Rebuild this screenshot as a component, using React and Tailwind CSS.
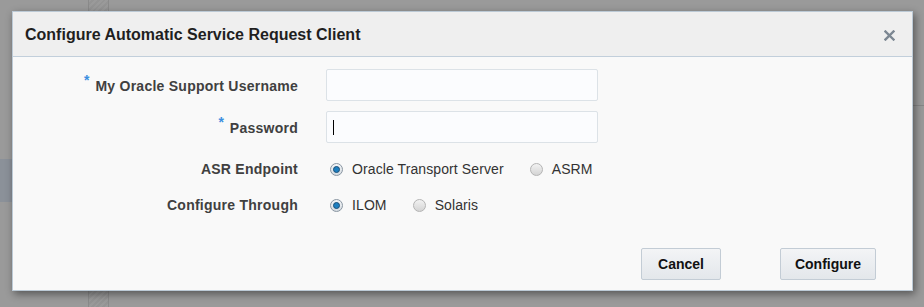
import { useState } from "react"

function Radio({ checked }) {
  return (
    <span
      className={`flex items-center justify-center w-[13px] h-[13px] rounded-full border ${
        checked ? "border-[#8a96a2] bg-gradient-to-b from-[#f4f6f8] to-[#d5dbe1]" : "border-[#b4b4b4] bg-gradient-to-b from-[#f2f2f2] to-[#d4d4d4]"
      }`}
    >
      {checked && <span className="w-[7px] h-[7px] rounded-full bg-[#1d7fc0] border border-[#1b4f78]" />}
    </span>
  )
}

function RadioGroup({ options, value, onChange, gap }) {
  return (
    <div className={`flex items-center ${gap}`}>
      {options.map((o) => (
        <label key={o} className="flex items-center gap-[9px] cursor-pointer" onClick={() => onChange(o)}>
          <Radio checked={value === o} />
          <span className="text-[14px] text-[#333] tracking-[0.1px]">{o}</span>
        </label>
      ))}
    </div>
  )
}

function Label({ children, required }) {
  return (
    <div className={`w-[285px] shrink-0 flex justify-end items-center ${required ? "pt-[3px]" : ""}`}>
      {required && <span className="text-[14px] font-bold text-[#3b8fe0] mr-[6px] -mt-[12px]">*</span>}
      <span className="text-[14px] font-bold text-[#404040] tracking-[0.25px]">{children}</span>
    </div>
  )
}

export default function App() {
  const [endpoint, setEndpoint] = useState("Oracle Transport Server")
  const [through, setThrough] = useState("ILOM")

  return (
    <div className="relative w-[924px] h-[307px] bg-[#9a9a9a] overflow-hidden" style={{ fontFamily: '"Liberation Sans", Arial, sans-serif' }}>
      {/* page bits behind the overlay */}
      <div className="absolute left-[88px] top-0 w-[21px] h-[307px] border-x border-[#8a8a8a] bg-[repeating-linear-gradient(135deg,#9a9a9a_0px,#9a9a9a_2px,#949494_2px,#949494_4px)]" />
      <div className="absolute left-0 top-[159px] w-[14px] h-[43px] bg-[#8b9199]" />
      <div className="absolute left-[905px] top-[105px] w-[19px] h-px bg-[#878787]" />

      <div className="relative ml-[12px] mt-[11px] w-[901px] h-[280px] flex flex-col bg-[#f9f9f9] border border-[#bccad6] shadow-[2px_3px_8px_rgba(0,0,0,0.45)]">
        <div className="h-[45px] shrink-0 flex items-center justify-between bg-[#efefef] border-b border-[#c2cfdb] pl-[12px] pr-[17px]">
          <h1 className="text-[16px] font-bold text-[#1f1f1f] pt-[1px]">Configure Automatic Service Request Client</h1>
          <svg width="11" height="11" viewBox="0 0 11 11" className="mt-[2px]">
            <path d="M1.5 1.5 L9.5 9.5 M9.5 1.5 L1.5 9.5" stroke="#7c8792" strokeWidth="2.4" strokeLinecap="square" />
          </svg>
        </div>

        <div className="flex-1 flex flex-col pt-[12px]">
          <div className="flex items-center gap-[28px]">
            <Label required>My Oracle Support Username</Label>
            <input className="w-[272px] h-[32px] rounded-[2px] border border-[#dce2e7] bg-[#fbfcfe] outline-none px-[6px] text-[13px]" />
          </div>
          <div className="flex items-center gap-[28px] mt-[10px]">
            <Label required>Password</Label>
            <div className="w-[272px] h-[32px] rounded-[2px] border border-[#dce2e7] bg-[#fbfcfe] flex items-center pl-[6px]">
              <span className="w-px h-[15px] bg-black" />
            </div>
          </div>
          <div className="flex items-center gap-[28px] mt-[13px] h-[26px]">
            <Label>ASR Endpoint</Label>
            <div className="pl-[4px]">
              <RadioGroup options={["Oracle Transport Server", "ASRM"]} value={endpoint} onChange={setEndpoint} gap="gap-[26px]" />
            </div>
          </div>
          <div className="flex items-center gap-[28px] mt-[10px] h-[26px]">
            <Label>Configure Through</Label>
            <div className="pl-[4px]">
              <RadioGroup options={["ILOM", "Solaris"]} value={through} onChange={setThrough} gap="gap-[26px]" />
            </div>
          </div>

          <div className="mt-auto flex justify-end gap-[59px] pr-[36px] pb-[10px]">
            <button className="w-[80px] h-[32px] rounded-[2px] border border-[#c3ccd5] bg-gradient-to-b from-[#f3f4f6] to-[#e3e7eb] text-[14px] font-bold text-[#111]">Cancel</button>
            <button className="w-[96px] h-[32px] rounded-[2px] border border-[#c3ccd5] bg-gradient-to-b from-[#f3f4f6] to-[#e3e7eb] text-[14px] font-bold text-[#111]">Configure</button>
          </div>
        </div>
      </div>
    </div>
  )
}
